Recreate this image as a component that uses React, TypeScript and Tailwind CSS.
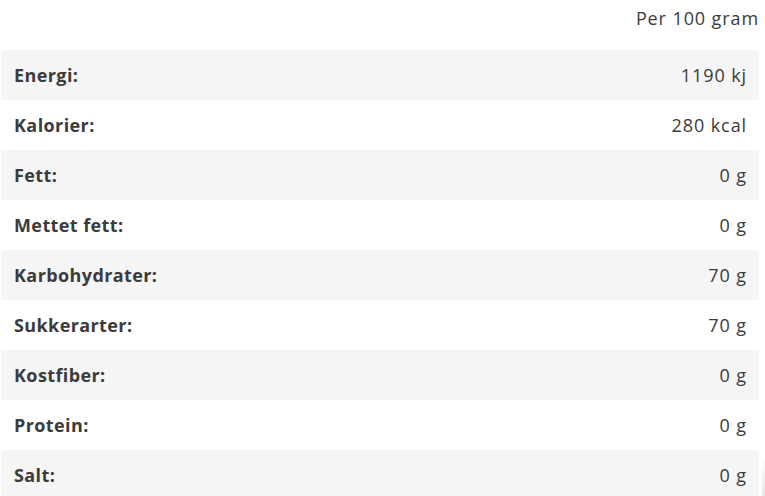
import React from "react";

const rows: [string, string][] = [
  ["Energi:", "1190 kj"],
  ["Kalorier:", "280 kcal"],
  ["Fett:", "0 g"],
  ["Mettet fett:", "0 g"],
  ["Karbohydrater:", "70 g"],
  ["Sukkerarter:", "70 g"],
  ["Kostfiber:", "0 g"],
  ["Protein:", "0 g"],
  ["Salt:", "0 g"],
];

export default function App() {
  return (
    <div
      className="relative w-[765px] h-[496px] overflow-hidden bg-white text-[#3b3b3b]"
      style={{ fontFamily: "'Open Sans', sans-serif" }}
    >
      <div className="h-[50px] flex items-start justify-end pr-[6px] pt-[6px] text-[18px] leading-[24px] tracking-[0.9px]">
        Per 100 gram
      </div>
      <div className="ml-[1px] w-[758px] flex flex-col">
        {rows.map(([label, value], i) => (
          <div
            key={label}
            className={`h-[50px] flex items-center justify-between pl-[13px] pr-[12px] text-[18px] ${
              i % 2 === 0 ? "bg-[#f5f5f5]" : "bg-white"
            }`}
          >
            <span className="font-bold tracking-[0.4px]">{label}</span>
            <span className="tracking-[0.9px]">{value}</span>
          </div>
        ))}
      </div>
      <div className="absolute right-0 top-[455px] w-[3px] h-[41px] bg-gradient-to-b from-white to-[#e6e6e6]" />
    </div>
  );
}
